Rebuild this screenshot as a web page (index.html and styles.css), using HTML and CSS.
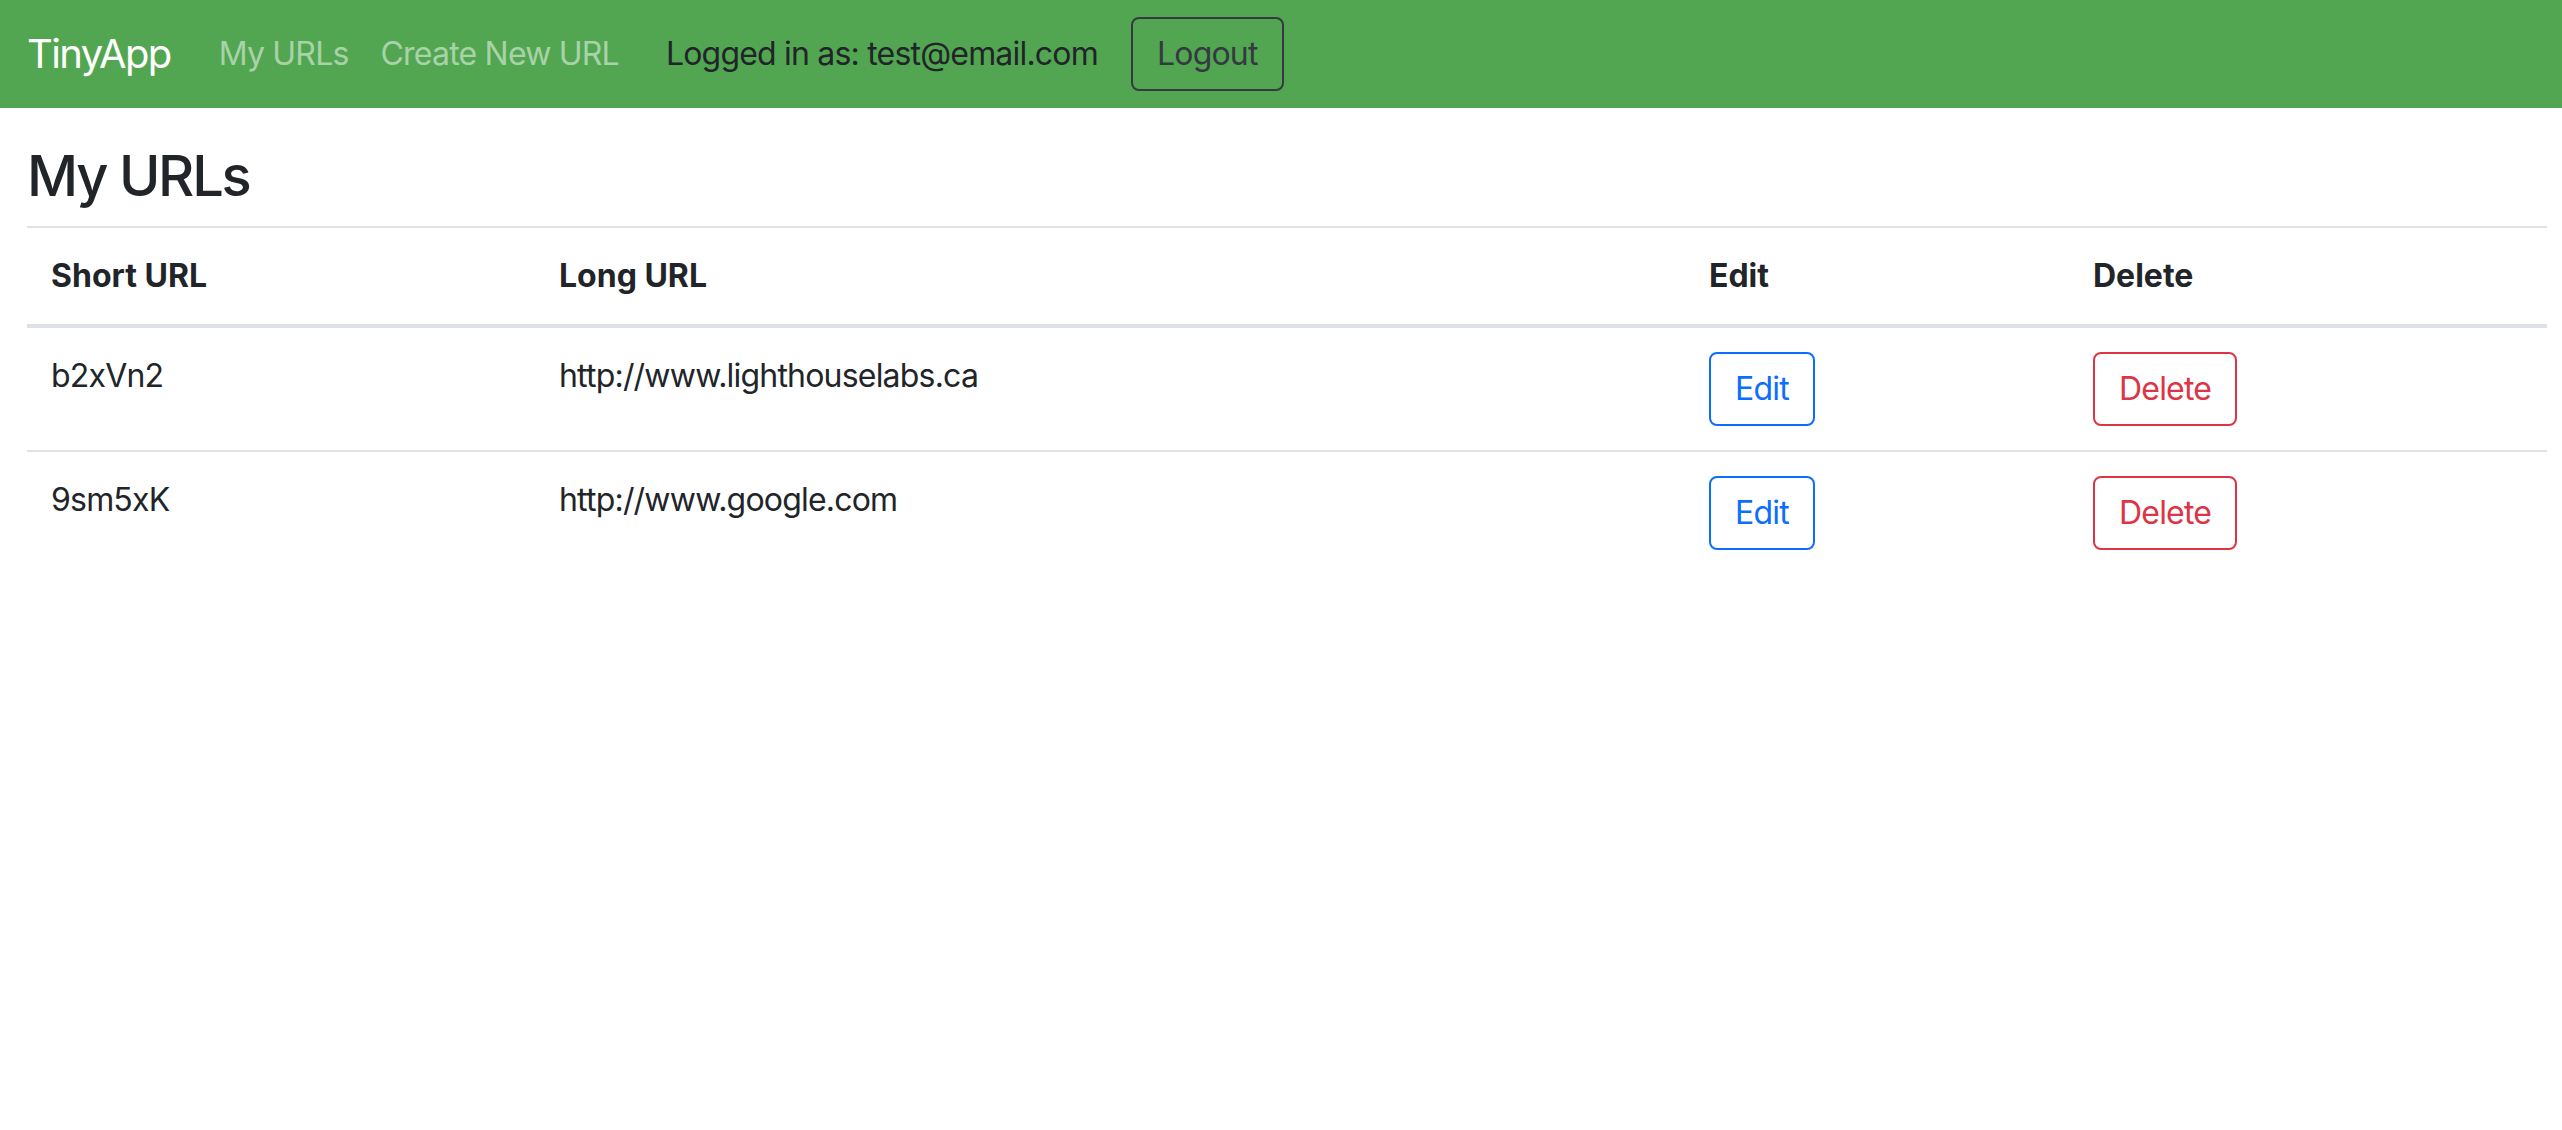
FILE: index.html
```html
<!DOCTYPE html>
<html lang="en">
<head>
<meta charset="utf-8">
<title>TinyApp</title>
<link rel="stylesheet" href="styles.css">
</head>
<body>
<nav class="navbar">
  <a class="brand" href="#">TinyApp</a>
  <a class="nav-link" href="#">My URLs</a>
  <a class="nav-link" href="#">Create New URL</a>
  <span class="user">Logged in as: test@email.com</span>
  <button class="btn btn-dark">Logout</button>
</nav>
<main class="container">
  <h3 class="title">My URLs</h3>
  <table class="table">
    <colgroup>
      <col class="c-short">
      <col class="c-long">
      <col class="c-edit">
      <col class="c-del">
    </colgroup>
    <thead>
      <tr>
        <th>Short URL</th>
        <th>Long URL</th>
        <th>Edit</th>
        <th>Delete</th>
      </tr>
    </thead>
    <tbody>
      <tr>
        <td>b2xVn2</td>
        <td>http://www.lighthouselabs.ca</td>
        <td><button class="btn btn-primary">Edit</button></td>
        <td><button class="btn btn-danger">Delete</button></td>
      </tr>
      <tr>
        <td>9sm5xK</td>
        <td>http://www.google.com</td>
        <td><button class="btn btn-primary">Edit</button></td>
        <td><button class="btn btn-danger">Delete</button></td>
      </tr>
    </tbody>
  </table>
</main>
</body>
</html>
```

FILE: styles.css
```css
* { box-sizing: border-box; }

body {
  margin: 0;
  font-family: Inter, "Noto Sans", "Liberation Sans", sans-serif;
  font-size: 32px;
  line-height: 1.5;
  letter-spacing: -0.025em;
  color: #212529;
  background: #fff;
}

a { text-decoration: none; }

.navbar {
  display: flex;
  align-items: center;
  height: 108px;
  padding: 0 27px;
  background: #52a651;
}

.brand {
  font-size: 40px;
  line-height: 60px;
  letter-spacing: -0.04em;
  color: #fff;
  margin-right: 32px;
}

.nav-link {
  padding: 0 16px;
  color: rgba(255, 255, 255, 0.5);
}

.user {
  margin-left: 31px;
  margin-right: 33px;
  color: #212529;
}

.btn {
  font-family: inherit;
  font-size: 32px;
  line-height: 48px;
  letter-spacing: inherit;
  padding: 11px 24px;
  border: 2px solid;
  border-radius: 8px;
  background: transparent;
  cursor: pointer;
}

.btn-dark { color: #343a40; border-color: #343a40; }
.btn-primary { color: #0d6efd; border-color: #0d6efd; }
.btn-danger { color: #dc3545; border-color: #dc3545; }

.container {
  padding: 0 15px 0 27px;
}

.title {
  margin: 35px 0 16px;
  font-size: 56px;
  line-height: 1.2;
  font-weight: 500;
  letter-spacing: -0.04em;
}

.table {
  width: 100%;
  border-collapse: collapse;
}

.c-short { width: 508px; }
.c-long { width: 1150px; }
.c-edit { width: 384px; }

.table th,
.table td {
  padding: 24px;
  text-align: left;
  vertical-align: top;
  border-top: 2px solid #dee2e6;
}

.table th {
  font-weight: 700;
  letter-spacing: 0;
  border-bottom: 4px solid #dee2e6;
}
```
